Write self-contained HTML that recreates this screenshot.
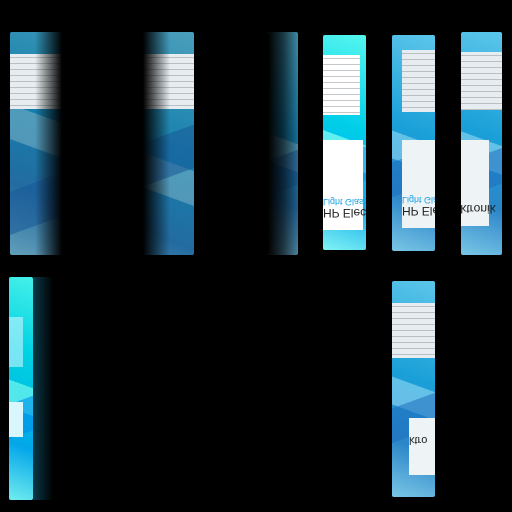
<!DOCTYPE html>
<html><head><style>
body{margin:0;width:512px;height:512px;background:#000;position:relative;overflow:hidden;font-family:"Liberation Sans",sans-serif}
.p{position:absolute;overflow:hidden;border-radius:2px}
.bg{position:absolute;inset:0;background:
 linear-gradient(160deg,transparent 0 55%,rgba(30,110,190,.55) 55% 70%,transparent 70%),
 linear-gradient(20deg,transparent 0 40%,rgba(170,230,250,.5) 40% 52%,transparent 52%),
 linear-gradient(200deg,#5cc6ea,#1aa0d8 45%,#2b86c8 75%,#7ac6e6)}
.txt{position:absolute;left:0;right:0;background:#e6ecef;
 background-image:repeating-linear-gradient(180deg,#e6ecef 0 3px,#b8c0c4 3px 4px,#e6ecef 4px 6px)}
.lbl{position:absolute;background:#eef3f6;color:#222;font-size:9px;line-height:11px;white-space:nowrap;transform:scaleY(-1)}
.fade{position:absolute;top:0;bottom:0}
</style></head><body>

<div class="p" style="left:10px;top:32px;width:184px;height:223px">
 <div class="bg" style="filter:brightness(.8)"></div>
 <div class="txt" style="top:22px;height:55px"></div>
 <div class="fade" style="left:25px;width:135px;background:linear-gradient(90deg,rgba(0,0,0,0),#000 20%,#000 80%,rgba(0,0,0,0))"></div>
</div>

<div class="p" style="left:268px;top:32px;width:30px;height:223px">
 <div class="bg" style="filter:brightness(.7)"></div>
 <div class="fade" style="left:0;width:30px;background:linear-gradient(90deg,#000,rgba(0,0,0,.6) 50%,rgba(0,0,0,0))"></div>
</div>

<div class="p" style="left:323px;top:35px;width:43px;height:215px">
 <div class="bg" style="filter:brightness(1.2) saturate(1.2) hue-rotate(-8deg)"></div>
 <div class="txt" style="top:20px;height:60px;right:6px;background-color:#fff;background-image:repeating-linear-gradient(180deg,#fff 0 3px,#c4c8ca 3px 4px,#fff 4px 6px)"></div>
 <div class="lbl" style="left:0;top:105px;width:40px;height:90px;background:#fff"><div style="padding-top:12px;font-size:12px">HP Electr</div><div style="color:#19a0e0">Light Glass</div></div>
</div>

<div class="p" style="left:392px;top:35px;width:43px;height:216px">
 <div class="bg"></div>
 <div class="txt" style="top:15px;height:62px;left:10px"></div>
 <div class="lbl" style="left:10px;top:105px;width:33px;height:88px"><div style="padding-top:12px;font-size:12px">HP Electr</div><div style="color:#19a0e0">Light Glass</div></div>
</div>

<div class="p" style="left:461px;top:32px;width:41px;height:223px">
 <div class="bg"></div>
 <div class="txt" style="top:20px;height:58px"></div>
 <div class="lbl" style="left:0;top:108px;width:28px;height:86px"><div style="padding-top:12px;font-size:12px;margin-left:-18px">Elektronik</div></div>
</div>

<div class="p" style="left:9px;top:277px;width:24px;height:223px">
 <div class="bg" style="filter:brightness(1.15) saturate(1.3) hue-rotate(-10deg)"></div>
 <div style="position:absolute;left:0;top:40px;width:14px;height:50px;background:rgba(200,245,255,.6)"></div>
 <div style="position:absolute;left:0;top:125px;width:14px;height:35px;background:#d8f6fc"></div>
</div>
<div style="position:absolute;left:33px;top:277px;width:20px;height:223px;background:linear-gradient(90deg,#0a3a4a,rgba(0,0,0,0))"></div>

<div class="p" style="left:392px;top:281px;width:43px;height:216px">
 <div class="bg"></div>
 <div class="txt" style="top:22px;height:55px"></div>
 <div class="lbl" style="left:17px;top:137px;width:26px;height:57px"><div style="padding-top:30px;font-size:11px">ktro</div></div>
</div>

</body></html>
